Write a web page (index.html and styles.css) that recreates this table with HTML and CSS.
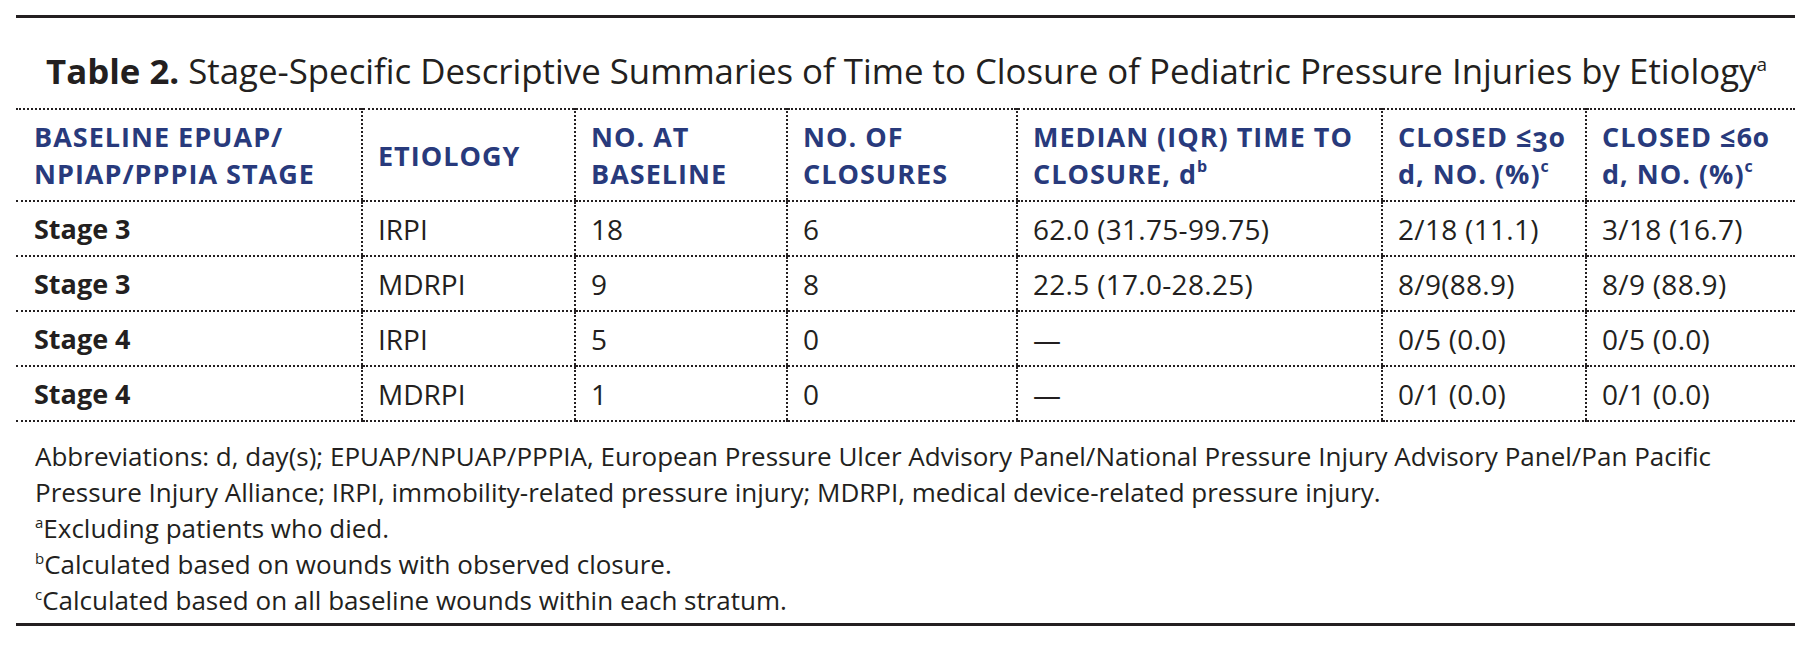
FILE: index.html
```html
<!DOCTYPE html>
<html lang="en">
<head>
  <meta charset="UTF-8" />
  <title>Table 2</title>
  <link rel="stylesheet" href="styles.css">
</head>
<body>
  <div class="sheet">
    <h2 class="caption"><strong>Table 2.</strong> Stage-Specific Descriptive Summaries of Time to Closure of Pediatric Pressure Injuries by Etiology<sup>a</sup></h2>

    <table class="data">
      <colgroup>
        <col class="c1"><col class="c2"><col class="c3"><col class="c4"><col class="c5"><col class="c6"><col class="c7">
      </colgroup>
      <thead>
        <tr>
          <th>BASELINE EPUAP/<br>NPIAP/PPPIA STAGE</th>
          <th>ETIOLOGY</th>
          <th>NO. AT<br>BASELINE</th>
          <th>NO. OF<br>CLOSURES</th>
          <th>MEDIAN (IQR) TIME TO<br>CLOSURE, d<sup>b</sup></th>
          <th>CLOSED ≤30<br>d, NO. (%)<sup>c</sup></th>
          <th>CLOSED ≤60<br>d, NO. (%)<sup>c</sup></th>
        </tr>
      </thead>
      <tbody>
        <tr>
          <td class="stage">Stage 3</td><td>IRPI</td><td>18</td><td>6</td>
          <td class="num">62.0 (31.75-99.75)</td><td class="num">2/18 (11.1)</td><td class="num">3/18 (16.7)</td>
        </tr>
        <tr>
          <td class="stage">Stage 3</td><td>MDRPI</td><td>9</td><td>8</td>
          <td class="num">22.5 (17.0-28.25)</td><td class="num">8/9(88.9)</td><td class="num">8/9 (88.9)</td>
        </tr>
        <tr>
          <td class="stage">Stage 4</td><td>IRPI</td><td>5</td><td>0</td>
          <td class="num">—</td><td class="num">0/5 (0.0)</td><td class="num">0/5 (0.0)</td>
        </tr>
        <tr>
          <td class="stage">Stage 4</td><td>MDRPI</td><td>1</td><td>0</td>
          <td class="num">—</td><td class="num">0/1 (0.0)</td><td class="num">0/1 (0.0)</td>
        </tr>
      </tbody>
    </table>

    <div class="notes">
      <p>Abbreviations: d, day(s); EPUAP/NPUAP/PPPIA, European Pressure Ulcer Advisory Panel/National Pressure Injury Advisory Panel/Pan Pacific Pressure Injury Alliance; IRPI, immobility-related pressure injury; MDRPI, medical device-related pressure injury.</p>
      <p><sup>a</sup>Excluding patients who died.</p>
      <p><sup>b</sup>Calculated based on wounds with observed closure.</p>
      <p><sup>c</sup>Calculated based on all baseline wounds within each stratum.</p>
    </div>
  </div>
</body>
</html>
```
FILE: styles.css
```css
* {
  box-sizing: border-box;
}
body {
  margin: 0;
  background: #fff;
  color: #231f20;
  font-family: 'Open Sans', sans-serif;
}

.sheet {
  margin: 15px 18px 0 16px;
  border-top: 3px solid #231f20;
  border-bottom: 3px solid #231f20;
  width: 1779px;
}

.caption {
  margin: 0;
  padding: 33px 0 0 30px;
  height: 90px;
  font-size: 34.8px;
  font-weight: 400;
  line-height: 40px;
  white-space: nowrap;
}
.caption strong {
  font-weight: 700;
}
.caption sup {
  font-size: 19px;
  vertical-align: 13px;
  line-height: 0;
}

.data {
  width: 1779px;
  border-collapse: collapse;
  table-layout: fixed;
  border-top: 2px dotted #231f20;
}
.c1 { width: 346px; }
.c2 { width: 213px; }
.c3 { width: 212px; }
.c4 { width: 230px; }
.c5 { width: 365px; }
.c6 { width: 204px; }
.c7 { width: 209px; }

.data th,
.data td {
  text-align: left;
  vertical-align: middle;
  padding: 0 0 0 15px;
  border-bottom: 2px dotted #231f20;
  border-left: 2px dotted #231f20;
  white-space: nowrap;
}
.data th:first-child,
.data td:first-child {
  border-left: none;
  padding-left: 18px;
}

.data th {
  height: 92px;
  color: #283a7c;
  font-size: 27px;
  font-weight: 700;
  letter-spacing: 1px;
  line-height: 37px;
  font-variant-numeric: oldstyle-nums;
}
.data th sup {
  font-size: 16px;
  vertical-align: 12px;
  line-height: 0;
  letter-spacing: 0;
}

.data td {
  height: 55px;
  font-size: 28px;
  line-height: 34px;
}
.data td.stage {
  font-size: 27px;
  font-weight: 700;
}
.data td.num {
  letter-spacing: 0.3px;
}

.notes {
  padding: 16px 0 5px 19px;
}
.notes p {
  margin: 0;
  max-width: 1700px;
  font-size: 26px;
  line-height: 36px;
}
.notes sup {
  font-size: 15px;
  vertical-align: 10px;
  line-height: 0;
}
```
